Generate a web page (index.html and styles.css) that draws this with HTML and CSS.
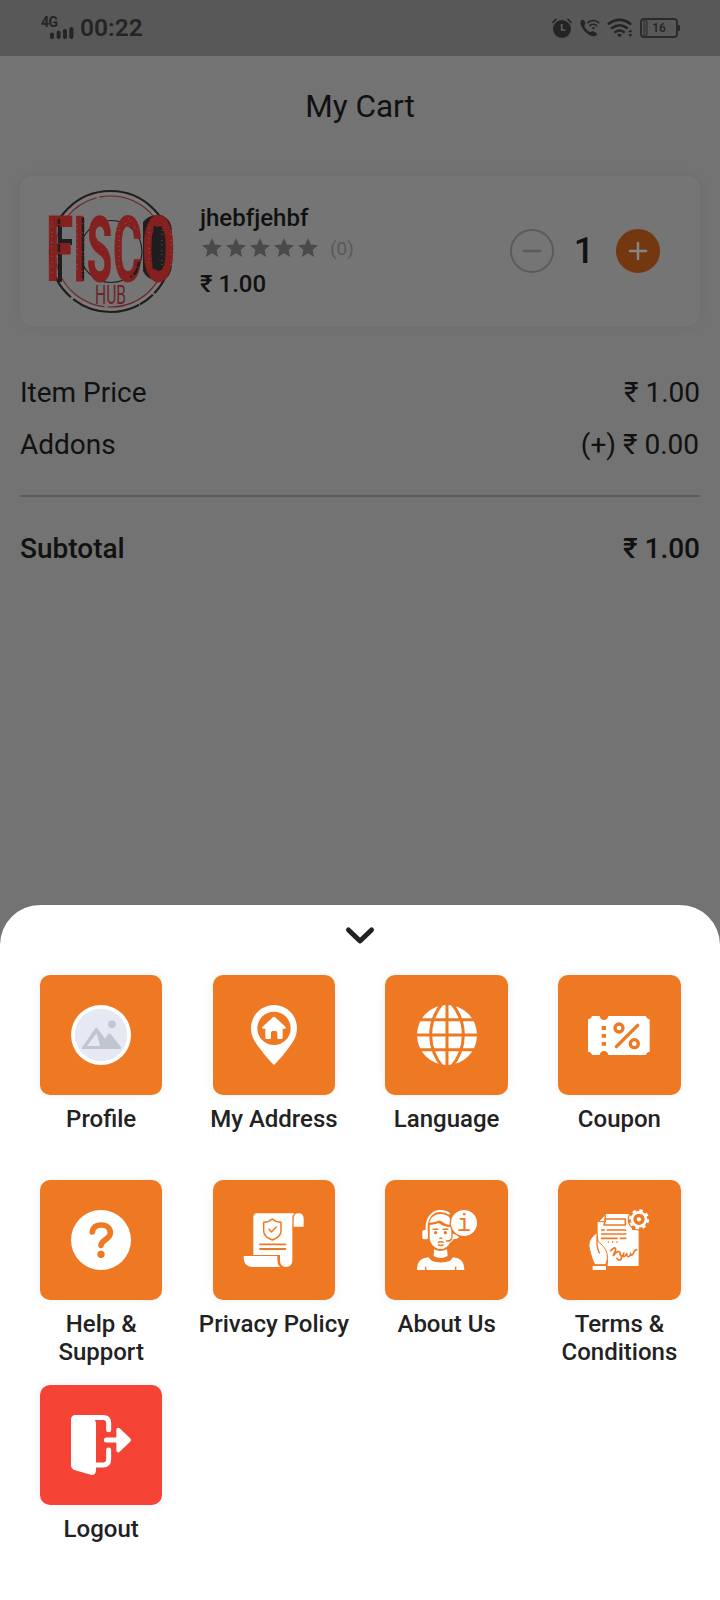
FILE: index.html
```html
<!DOCTYPE html>
<html lang="en">
<head>
    <meta charset="UTF-8">
    <meta name="viewport" content="width=device-width, initial-scale=1.0">
    <title>My Cart</title>
    <link rel="stylesheet" href="styles.css">
</head>
<body>
    <div class="status-bar">
        <div class="status-left">
            <div class="signal">
                <span>4G</span>
                <svg width="24" height="12" viewBox="0 0 24 12">
                    <path d="M2 7.500v2.500M8.600 5.800v4.200M15 4v6M21.400 2v8" stroke="#242424" stroke-width="4" stroke-linecap="round"/>
                </svg>
            </div>
            <span class="clock">00:22</span>
        </div>
        <div class="status-right">
            <svg class="alarm" width="20" height="20" viewBox="0 0 60 60">
                <circle cx="30" cy="33" r="27" fill="#242424"/>
                <path d="M3 13L12 4M57 13L48 4" stroke="#242424" stroke-width="5" stroke-linecap="round"/>
                <path d="M29 18v18h11" fill="none" stroke="#5f5f5f" stroke-width="5"/>
            </svg>
            <svg class="call" width="20" height="18" viewBox="0 0 60 54">
                <path d="M4 4C8 0 13 4 16 12c1 4-3 6-3 9 2 8 9 14 16 18 4 1 6-3 10-2 8 3 15 7 11 11-6 7-18 4-30-6C6 31-3 12 4 4z" fill="#242424"/>
                <g fill="none" stroke="#242424" stroke-width="4.5" stroke-linecap="round">
                    <path d="M23 11q17-13 33 0M29 20q11-8 21 0"/>
                </g>
                <path d="M34 25h11l-5 7z" fill="#242424"/>
            </svg>
            <svg class="wifi" width="26" height="20" viewBox="0 0 78 60">
                <g fill="none" stroke="#242424" stroke-width="7.5" stroke-linecap="round">
                    <path d="M5 17Q38-6 70 17M15 30Q38 13 60 30M25 42Q38 33 50 42"/>
                </g>
                <path d="M30 50q8-5 15 0l-7 8zM64 43l6-9 6 9zM64 48h12l-6 10z" fill="#242424"/>
            </svg>
            <div class="battery"><span>16</span></div>
        </div>
    </div>

    <h1>My Cart</h1>

    <div class="cart-item">
        <svg class="shop-logo" width="128" height="128" viewBox="47 187 128 128">
            <circle cx="110.5" cy="251.5" r="60.5" fill="none" stroke="#1f1d1e" stroke-width="2.2" stroke-dasharray="46 2 16 1 70 3 45 1 200"/>
            <circle cx="110.5" cy="251.5" r="58" fill="none" stroke="#817a7b" stroke-width="2"/>
            <circle cx="110.5" cy="251.5" r="55.5" fill="none" stroke="#6e2427" stroke-width="1.1" stroke-dasharray="90 3 60 4"/>
            <circle cx="111" cy="251.5" r="31" fill="none" stroke="#1f1d1e" stroke-width="1.2"/>
            <!-- offset shading behind the letters -->
            <path d="M58 217h14v6H62v16h10v6H62v37h-4zM78 217h6v64h-6zM143 222q6-8 18-7 11 4 11 18v30q0 16-13 18-12-1-16-10z" fill="#1f1d1e"/>
            <g class="logo-text">
                <text x="46" y="281" textLength="27" lengthAdjust="spacingAndGlyphs">F</text>
                <text x="73" y="281" textLength="13" lengthAdjust="spacingAndGlyphs">I</text>
                <text x="87" y="281" textLength="25" lengthAdjust="spacingAndGlyphs">S</text>
                <text x="113" y="281" textLength="29" lengthAdjust="spacingAndGlyphs">C</text>
                <text x="142" y="281" textLength="33" lengthAdjust="spacingAndGlyphs">O</text>
            </g>
            <path d="M158 227q5 24 0 42" stroke="#1f1d1e" stroke-width="8" fill="none"/>
            <path d="M59 219v62M83 218v60M139 262q-2 13-9 15M155 226q-3 24-1 44" stroke="#1f1d1e" stroke-width="2.5" stroke-dasharray="5 1 8 2 2 1" fill="none"/>
            <path d="M52 222v52M77 224v50M97 240l6 12M119 226v44M128 218l10 12M125 223l12 6M149 228v40M162 230v38M171 230v38" stroke="#747474" stroke-width=".8" stroke-dasharray="1 3 1 5" fill="none"/>
            <text class="logo-hub" x="95" y="304" textLength="31" lengthAdjust="spacingAndGlyphs">HUB</text>
        </svg>
        <div class="item-info">
            <div class="item-name">jhebfjehbf</div>
            <div class="rating">
                <svg width="120" height="24" viewBox="0 0 120 24">
                    <defs><path id="star" d="M12 17.300L18.200 21l-1.600-7L22 9.200l-7.200-.600L12 2 9.200 8.600 2 9.200 7.500 14l-1.700 7z"/></defs>
                    <g fill="#4b4a49">
                        <use href="#star"/><use href="#star" x="24"/><use href="#star" x="48"/><use href="#star" x="72"/><use href="#star" x="96"/>
                    </g>
                </svg>
                <span>(0)</span>
            </div>
            <div class="item-price">₹ 1.00</div>
        </div>
        <div class="quantity">
            <button class="minus"><svg width="20" height="20" viewBox="0 0 20 20"><path d="M2 10h16"/></svg></button>
            <span>1</span>
            <button class="plus"><svg width="20" height="20" viewBox="0 0 20 20"><path d="M2 10h16M10 2v16"/></svg></button>
        </div>
    </div>

    <div class="summary">
        <div class="row"><span>Item Price</span><span>₹ 1.00</span></div>
        <div class="row addons"><span>Addons</span><span>(+) ₹ 0.00</span></div>
        <div class="row subtotal"><span>Subtotal</span><span>₹ 1.00</span></div>
    </div>

    <div class="sheet">
        <svg class="chevron" width="30" height="18" viewBox="0 0 30 18"><path d="M3.5 3L15 14 26.500 3"/></svg>
        <div class="menu">
            <div class="menu-item">
                <div class="tile">
                    <svg width="60" height="60" viewBox="0 0 180 180">
                        <circle cx="90" cy="90" r="90" fill="#fff"/>
                        <circle cx="90" cy="90" r="79" fill="#e6e9f3"/>
                        <circle cx="123" cy="58" r="11.5" fill="#bfc5d1"/>
                        <path d="M33 132q-2-2 1-6L72 71q4-6 8 0l22 30 9-13q4-5 8 0l29 36q5 8-1 8z" fill="#bfc5d1"/>
                        <path d="M48 123l29-38q4 16 10 38z" fill="#e6e9f3"/>
                    </svg>
                </div>
                <div class="label">Profile</div>
            </div>
            <div class="menu-item">
                <div class="tile">
                    <svg width="60" height="60" viewBox="0 0 180 180">
                        <path d="M90 0a69 69 0 0 0-69 69c0 28 14 45 27 62 14 19 31 38 42 49 11-11 28-30 42-49 13-17 27-34 27-62A69 69 0 0 0 90 0z" fill="#fff"/>
                        <circle cx="90" cy="70" r="50" fill="#ef7822"/>
                        <path d="M85 38q5-5 10 0l30 28q2 5-2 5h-7v27q0 4-4 4h-9q-3 0-3-4V83q0-5-5-5H86q-5 0-5 5v15q0 4-4 4h-9q-4 0-4-4V71h-7q-4 0-2-5z" fill="#fff"/>
                    </svg>
                </div>
                <div class="label">My Address</div>
            </div>
            <div class="menu-item">
                <div class="tile">
                    <svg width="60" height="60" viewBox="0 0 180 180">
                        <circle cx="90" cy="90" r="90" fill="#fff"/>
                        <g fill="none" stroke="#ef7822" stroke-width="9">
                            <path d="M0 44h180M0 90h180M0 134h180M90-2v184"/>
                            <path d="M80-10C28 50 28 130 80 190M100-10c52 60 52 140 0 200"/>
                        </g>
                    </svg>
                </div>
                <div class="label">Language</div>
            </div>
            <div class="menu-item">
                <div class="tile">
                    <svg width="60" height="60" viewBox="0 0 180 180">
                        <path d="M9 33h23q2 12 13 12t13-12h113q1 9 11 10v97q-10 1-11 10H58q-2-12-13-12t-13 12H9q-2-9-12-10V43Q7 42 9 33z" fill="#fff"/>
                        <path d="M38 63h13v12H38zM38 87h13v11H38zM38 111h13v11H38z" fill="#ef7822"/>
                        <g fill="none" stroke="#ef7822" stroke-width="10" stroke-linecap="round">
                            <circle cx="90" cy="69" r="12"/>
                            <circle cx="136" cy="116" r="12"/>
                            <path d="M82 125l64-64"/>
                        </g>
                    </svg>
                </div>
                <div class="label">Coupon</div>
            </div>
            <div class="menu-item">
                <div class="tile">
                    <svg width="60" height="60" viewBox="0 0 180 180">
                        <circle cx="90" cy="90" r="90" fill="#fff"/>
                        <path d="M64 66C66 51 76 45 91 45c16 0 27 9 27 24 0 19-28 20-28 37" fill="none" stroke="#ef7822" stroke-width="17" stroke-linecap="round"/>
                        <circle cx="90" cy="133" r="11" fill="#ef7822"/>
                    </svg>
                </div>
                <div class="label">Help &amp; Support</div>
            </div>
            <div class="menu-item">
                <div class="tile">
                    <svg width="60" height="60" viewBox="0 0 180 180">
                        <g fill="#fff">
                            <path d="M28 22q0-12 13-12h110q-6 5-6 17v124q0 20-19 20-18 0-18-20v-16H28z"/>
                            <path d="M149 50V26q0-16 14-16 16 0 16 16v24z"/>
                            <path d="M-1 138h101v13q0 13 8 20H27q-25 0-28-24z"/>
                        </g>
                        <g fill="none" stroke="#ef7822" stroke-width="4.5" stroke-linecap="round" stroke-linejoin="round">
                            <path d="M85 27q10 9 26 10v26q0 17-26 27-26-10-26-27V37q16-1 26-10zM75 58l7 8 15-15"/>
                            <path d="M48 103h76M48 117h76" stroke-width="5.5"/>
                        </g>
                    </svg>
                </div>
                <div class="label">Privacy Policy</div>
            </div>
            <div class="menu-item">
                <div class="tile">
                    <svg width="60" height="60" viewBox="0 0 180 180">
                        <path d="M29 62C26 22 47 3 70 3q17 0 28 9" fill="none" stroke="#fff" stroke-width="6"/>
                        <g fill="#fff">
                            <path d="M37 38C41 22 54 12 71 12q15 0 26 10l5 22C79 46 75 29 66 32q-12 5-29 6z"/>
                            <path d="M38 45q16-1 28-6c8 8 20 12 37 12v36q-4 22-25 30H64Q42 109 38 87z"/>
                            <rect x="16" y="60" width="17" height="28" rx="5"/>
                            <path d="M107 71q15 3 19 8-1 9-16 8-6 12-21 11v-5q14 0 18-10z"/>
                            <path d="M51 118q19 10 39 0l2 20q-20 12-42 0z"/>
                            <path d="M0 180c0-26 13-36 34-38 18 18 56 18 74 0 21 2 34 12 34 38z"/>
                            <circle cx="141" cy="39" r="41" stroke="#ef7822" stroke-width="4"/>
                        </g>
                        <g fill="none" stroke="#ef7822" stroke-width="4.500">
                            <path d="M47 58h17M77 58h17M62 97q9-4 18 0M63 104q8 5 17 0M67 85h9M26 170v10M116 170v10"/>
                            <path d="M39 139q-1 16 33 16 33 0 32-16M104 86q-4 9-17 7"/>
                        </g>
                        <circle cx="56" cy="68" r="5" fill="#ef7822"/>
                        <circle cx="85" cy="68" r="5" fill="#ef7822"/>
                        <text class="info-i" x="141" y="62">i</text>
                    </svg>
                </div>
                <div class="label">About Us</div>
            </div>
            <div class="menu-item">
                <div class="tile">
                    <svg width="60" height="60" viewBox="0 0 180 180">
                        <path d="M50 12h79v48h20v108H56q5-30-10-52l-20-20V36h24z" fill="#fff"/>
                        <path d="M28 35l20-21v21z" fill="#fff" stroke="#ef7822" stroke-width="3"/>
                        <g fill="none" stroke="#ef7822" stroke-width="5">
                            <path d="M45 45l5-18h59v18z" stroke-linejoin="round"/>
                            <path d="M36 60h12M53 60h59M36 72h76M36 85h50M92 85h20"/>
                            <path d="M56 96h4M69 96h4M82 96h4"/>
                            <path d="M65 122q15-16 15-2l-8 18c12-16 19-16 22-9 0 12 8 13 11-1-6 15-1 16 8 4 2 10 7 12 12 0 2 6 7 4 11-9q3-4 7-4M84 145q4 8 11 4 6-7-2-16" stroke-linecap="round"/>
                        </g>
                        <circle cx="150" cy="28" r="34" fill="#ef7822"/>
                        <circle cx="150" cy="28" r="27" fill="none" stroke="#fff" stroke-width="7" stroke-dasharray="10.600 10.600"/>
                        <circle cx="150" cy="28" r="21" fill="none" stroke="#fff" stroke-width="8"/>
                        <circle cx="150" cy="28" r="6.5" fill="#fff"/>
                        <path d="M17 74q8-9 8 2l2 18q16 12 24 27 9 21-1 43H17Q7 144 2 120q-9-28 15-46z" fill="#fff" stroke="#ef7822" stroke-width="3"/>
                        <path d="M24 78v25q1 13 7 26" fill="none" stroke="#ef7822" stroke-width="4" stroke-linecap="round"/>
                        <path d="M11 168h40v12H11z" fill="#fff"/>
                    </svg>
                </div>
                <div class="label">Terms &amp; Conditions</div>
            </div>
            <div class="menu-item">
                <div class="tile logout">
                    <svg width="60" height="60" viewBox="0 0 180 180">
                        <path d="M0 14Q0 0 14 0h24l27 11q10 4 10 15v140q0 14-13 14L10 165q-10-4-10-14z" fill="#fff"/>
                        <path d="M14 7.500h82q17 0 17 17v20M113 105v28q0 17-17 17H70M106 75h36" fill="none" stroke="#fff" stroke-width="15" stroke-linecap="round"/>
                        <path d="M142 44l32 31-32 31z" fill="#fff" stroke="#fff" stroke-width="12" stroke-linejoin="round"/>
                    </svg>
                </div>
                <div class="label">Logout</div>
            </div>
        </div>
    </div>
</body>
</html>
```
FILE: styles.css
```css
* {
    box-sizing: border-box;
}
body {
    margin: 0;
    width: 720px;
    height: 1600px;
    background: #737373;
    color: #111;
    font-family: Roboto, sans-serif;
    font-size: 24px;
    display: flex;
    flex-direction: column;
    overflow: hidden;
}
svg {
    display: block;
    overflow: visible;
    flex-shrink: 0;
}

/* Status bar */
.status-bar {
    height: 56px;
    background: #585858;
    color: #242424;
    display: flex;
    justify-content: space-between;
    padding: 0 40px 0 41px;
    flex-shrink: 0;
}
.status-left,
.status-right {
    display: flex;
}
.signal {
    width: 33px;
    padding-top: 15px;
    font-size: 14px;
    line-height: 14px;
    font-weight: 700;
}
.signal span {
    display: block;
    height: 11.5px;
    letter-spacing: -0.5px;
}
.signal svg {
    margin-left: 9px;
}
.clock {
    font-size: 24.5px;
    font-weight: 600;
    line-height: 28px;
    padding: 14px 0 0 6px;
}
.status-right {
    align-items: flex-start;
    padding-top: 18px;
}
.call {
    margin: 1px 0 0 8px;
}
.wifi {
    margin: 0 0 0 7px;
}
.battery {
    position: relative;
    width: 38px;
    height: 20px;
    margin: 0 2px 0 7px;
    border: 2px solid #2b2b2b;
    border-radius: 4px;
    background: linear-gradient(90deg, transparent 1px, #414141 1px, #414141 6px, transparent 6px);
    font-size: 12px;
    font-weight: 500;
    line-height: 16px;
    text-align: center;
}
.battery::after {
    content: "";
    position: absolute;
    right: -4px;
    top: 5px;
    width: 2px;
    height: 6px;
    background: #2b2b2b;
}

/* Cart */
h1 {
    margin: 33px 0 33px;
    font-size: 31.5px;
    font-weight: 400;
    line-height: 36px;
    text-align: center;
}
.cart-item {
    height: 150px;
    margin: 18px 20px 0;
    border-radius: 12px;
    background: #757575;
    box-shadow: 0 0 14px rgba(0,0,0,0.05);
    display: flex;
    align-items: center;
    padding: 0 40px 0 27px;
}
.logo-text {
    font-size: 90px;
    font-weight: 700;
    fill: #84201f;
    stroke: #84201f;
    stroke-width: 1;
}
.logo-hub {
    font-size: 26px;
    fill: #6e2427;
}
.item-info {
    margin-left: 25px;
}
.item-name,
.item-price {
    font-weight: 500;
    line-height: 28px;
}
.rating {
    display: flex;
    align-items: center;
    height: 24px;
    margin: 4px 0 10px;
    font-size: 19px;
    color: #595959;
}
.rating span {
    margin-left: 10px;
}
.quantity {
    display: flex;
    align-items: center;
    margin-left: auto;
    font-size: 36px;
    font-weight: 500;
}
.quantity span {
    width: 62px;
    padding-right: 2px;
    text-align: center;
}
.quantity button {
    display: flex;
    align-items: center;
    justify-content: center;
    width: 44px;
    height: 44px;
    padding: 0;
    border: 2px solid #5b5b5b;
    border-radius: 50%;
    background: none;
}
.quantity path {
    fill: none;
    stroke: #5b5b5b;
    stroke-width: 2.5;
    stroke-linecap: round;
}
.quantity .plus {
    background: #733810;
    border-color: #733810;
}
.quantity .plus path {
    stroke: #858585;
}
.summary {
    margin: 50px 20px 0;
    font-size: 28px;
    line-height: 33px;
}
.row {
    display: flex;
    justify-content: space-between;
    margin-bottom: 19px;
}
.addons {
    padding-bottom: 34px;
    border-bottom: 2px solid #5b5b5b;
    margin-bottom: 35px;
}
.addons span:last-child {
    padding-right: 1px;
}
.subtotal {
    font-weight: 500;
}

/* Bottom sheet */
.sheet {
    height: 695px;
    margin-top: auto;
    flex-shrink: 0;
    background: #fff;
    border-radius: 40px 40px 0 0;
    color: #222;
}
.chevron {
    margin: 22px auto 0;
}
.chevron path {
    fill: none;
    stroke: #222;
    stroke-width: 5;
    stroke-linecap: round;
    stroke-linejoin: round;
}
.menu {
    display: grid;
    grid-template-columns: repeat(4, 1fr);
    grid-auto-rows: 205px;
    padding: 0 14.2px 0 14.8px;
    margin-top: 30px;
}
.menu-item {
    display: flex;
    flex-direction: column;
    align-items: center;
}
.tile {
    display: flex;
    align-items: center;
    justify-content: center;
    width: 122.5px;
    height: 120px;
    border-radius: 10px;
    background: #ef7822;
    box-shadow: 0 0 12px rgba(0,0,0,0.06);
}
.logout {
    background: #f54336;
}
.label {
    width: 152px;
    margin-top: 10px;
    font-weight: 500;
    line-height: 28px;
    text-align: center;
}
.info-i {
    font-family: "Liberation Mono", monospace;
    font-size: 70px;
    fill: #ef7822;
    text-anchor: middle;
}
```
